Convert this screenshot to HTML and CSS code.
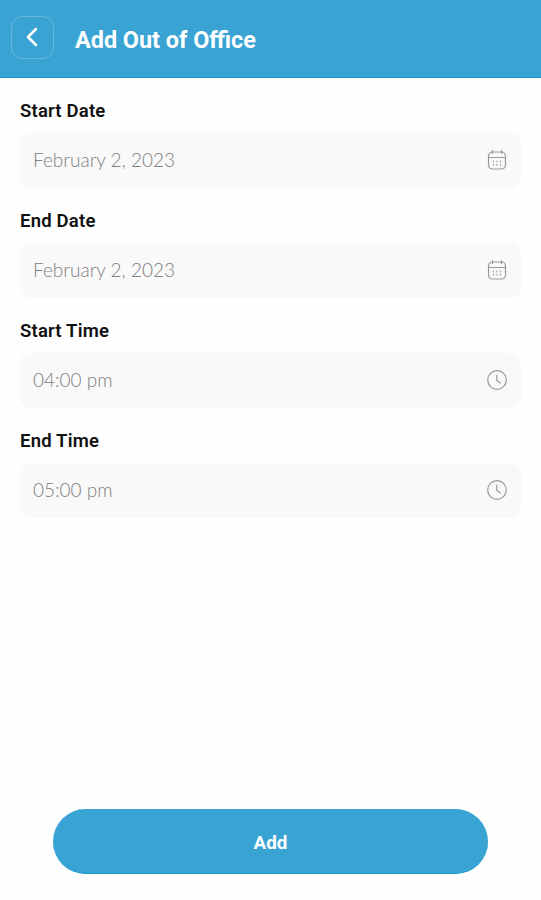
FILE: index.html
```
<!DOCTYPE html>
<html lang="en">
<head>
    <meta charset="UTF-8">
    <meta name="viewport" content="width=device-width, initial-scale=1.0">
    <title>Add Out of Office</title>
    <link rel="stylesheet" href="styles.css">
</head>
<body>
<header class="header">
    <button class="back" type="button" aria-label="Back">
        <svg width="12" height="20" viewBox="0 0 12 20"><path d="M10 2 2 10l8 8"/></svg>
    </button>
    <h1>Add Out of Office</h1>
</header>
<main class="form">
    <div class="group">
        <div class="label">Start Date</div>
        <div class="field">
            <span class="value">February 2, 2023</span>
            <svg class="icon" viewBox="0 0 22 22">
                <rect x="2.5" y="3" width="17" height="17" rx="4"/>
                <path d="M2.5 8.500h17M6.500 1.500v3M15.500 1.500v3"/>
                <path class="dots" d="M7.500 12v.8M11 12v.8M14.500 12v.8M7.500 15.300v.8M11 15.300v.8M14.500 15.300v.8"/>
            </svg>
        </div>
    </div>
    <div class="group">
        <div class="label">End Date</div>
        <div class="field">
            <span class="value">February 2, 2023</span>
            <svg class="icon" viewBox="0 0 22 22">
                <rect x="2.5" y="3" width="17" height="17" rx="4"/>
                <path d="M2.5 8.500h17M6.500 1.500v3M15.500 1.500v3"/>
                <path class="dots" d="M7.500 12v.8M11 12v.8M14.500 12v.8M7.500 15.300v.8M11 15.300v.8M14.500 15.300v.8"/>
            </svg>
        </div>
    </div>
    <div class="group">
        <div class="label">Start Time</div>
        <div class="field">
            <span class="value">04:00 pm</span>
            <svg class="icon" viewBox="0 0 22 22">
                <circle cx="11" cy="11" r="9.300"/>
                <path d="M10.800 6v5.500l3.700 2.500"/>
            </svg>
        </div>
    </div>
    <div class="group">
        <div class="label">End Time</div>
        <div class="field">
            <span class="value">05:00 pm</span>
            <svg class="icon" viewBox="0 0 22 22">
                <circle cx="11" cy="11" r="9.300"/>
                <path d="M10.800 6v5.500l3.700 2.500"/>
            </svg>
        </div>
    </div>
</main>
<footer class="footer">
    <button class="add" type="button">Add</button>
</footer>
</body>
</html>
```

FILE: styles.css
```
* {
    box-sizing: border-box;
}
body {
    font-family: Roboto, sans-serif;
    background-color: #fefefe;
    display: flex;
    flex-direction: column;
    height: 100vh;
    margin: 0;
}
.header {
    display: flex;
    align-items: center;
    height: 78px;
    padding: 0 11px 3px;
    background-color: #39a3d4;
    border-bottom: 1px solid #1c99cb;
    color: white;
}
.back {
    display: flex;
    align-items: center;
    justify-content: center;
    width: 43px;
    height: 43px;
    padding: 0 1px 0 0;
    background: none;
    border: 1px solid #64b8de;
    border-radius: 11px;
}
.back svg {
    fill: none;
    stroke: white;
    stroke-width: 2.5;
    stroke-linecap: round;
    stroke-linejoin: round;
}
h1 {
    margin: 6px 0 0 21px;
    font-size: 23.4px;
    font-weight: 700;
    line-height: 28px;
}
.form {
    flex: 1;
    padding: 22px 20px 0;
}
.group {
    height: 110px;
}
.label {
    height: 33px;
    color: #111;
    font-size: 18.5px;
    font-weight: 600;
    line-height: 23px;
    letter-spacing: 0.2px;
}
.field {
    display: flex;
    align-items: center;
    justify-content: space-between;
    height: 55px;
    padding: 0 13px 1px;
    background-color: #f9f9f9;
    border-radius: 11px;
}
.value {
    color: #808080;
    font-family: Lato, sans-serif;
    font-size: 19px;
    font-weight: 300;
    line-height: 22px;
    padding-bottom: 1px;
}
.icon {
    width: 22px;
    height: 22px;
    fill: none;
    stroke: #999;
    stroke-width: 1.2;
    stroke-linecap: round;
}
.footer {
    padding: 0 53px 26px;
}
.add {
    display: block;
    width: 100%;
    height: 65px;
    padding: 3px 0 0;
    background-color: #39a3d4;
    border: none;
    border-bottom: 1px solid #1c99cb;
    border-radius: 33px;
    color: white;
    font-family: Roboto, sans-serif;
    font-size: 18.8px;
    font-weight: 700;
}
```
